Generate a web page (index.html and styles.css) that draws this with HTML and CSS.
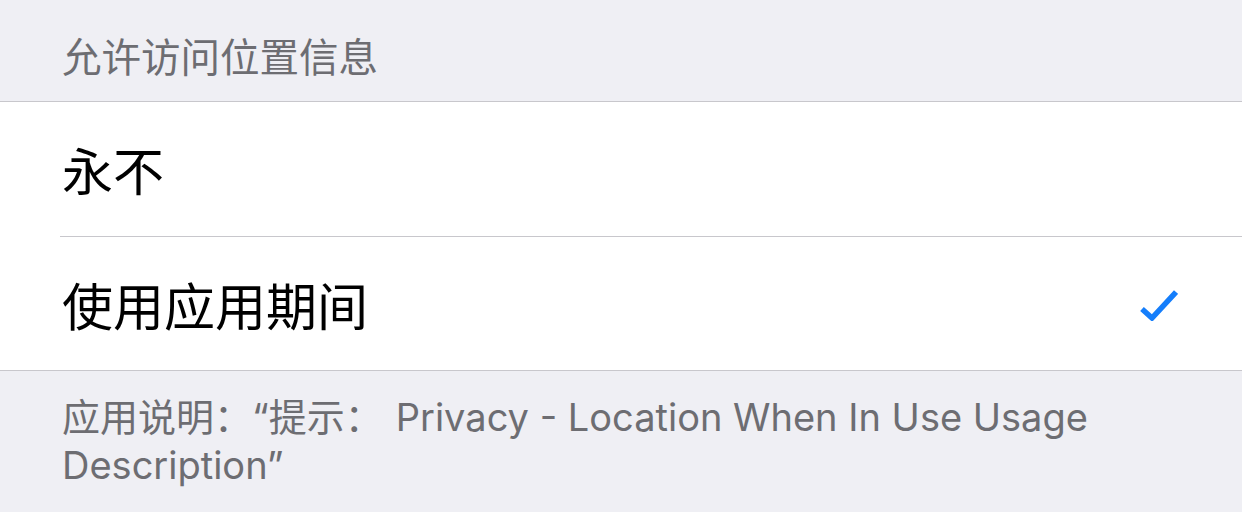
FILE: index.html
```html
<!DOCTYPE html>
<html lang="zh-CN">
<head>
<meta charset="utf-8">
<title>位置</title>
<link rel="stylesheet" href="styles.css">
</head>
<body>
<div class="header">允许访问位置信息</div>
<div class="group">
  <div class="row first">永不</div>
  <div class="row last">
    <span class="label">使用应用期间</span>
    <svg class="check" width="40" height="34" viewBox="0 0 40 34"><path d="M4 22 L14 31 L38 5" fill="none" stroke="#157efb" stroke-width="5.5" stroke-linecap="butt" stroke-linejoin="miter"/></svg>
  </div>
</div>
<div class="footer">应用说明：“提示：<span class="gap">Privacy - Location When In Use Usage Description”</span></div>
</body>
</html>
```

FILE: styles.css
```css
html, body {
  margin: 0;
  padding: 0;
}
body {
  background: #efeff4;
  font-family: "Inter", "Noto Sans CJK SC", sans-serif;
  width: 1242px;
  height: 512px;
  overflow: hidden;
}
.header {
  height: 102px;
  box-sizing: border-box;
  padding: 7px 0 0 62px;
  display: flex;
  align-items: center;
  font-family: "Noto Sans CJK SC", sans-serif;
  font-size: 39.5px;
  color: #6d6d72;
  border-bottom: 1px solid #c8c7cc;
}
.group {
  background: #ffffff;
  border-bottom: 1px solid #c8c7cc;
}
.row {
  height: 133px;
  margin-left: 60px;
  padding-left: 2px;
  padding-right: 64px;
  display: flex;
  align-items: center;
  justify-content: space-between;
  font-family: "Noto Sans CJK SC", sans-serif;
  font-size: 51px;
  color: #000000;
}
.row.first {
  height: 134px;
  border-bottom: 1px solid #c8c7cc;
}
.check {
  display: block;
}
.footer {
  padding: 22px 62px 0 62px;
  font-size: 38px;
  line-height: 48px;
  color: #6d6d72;
}
.gap {
  margin-left: 13px;
}
```
